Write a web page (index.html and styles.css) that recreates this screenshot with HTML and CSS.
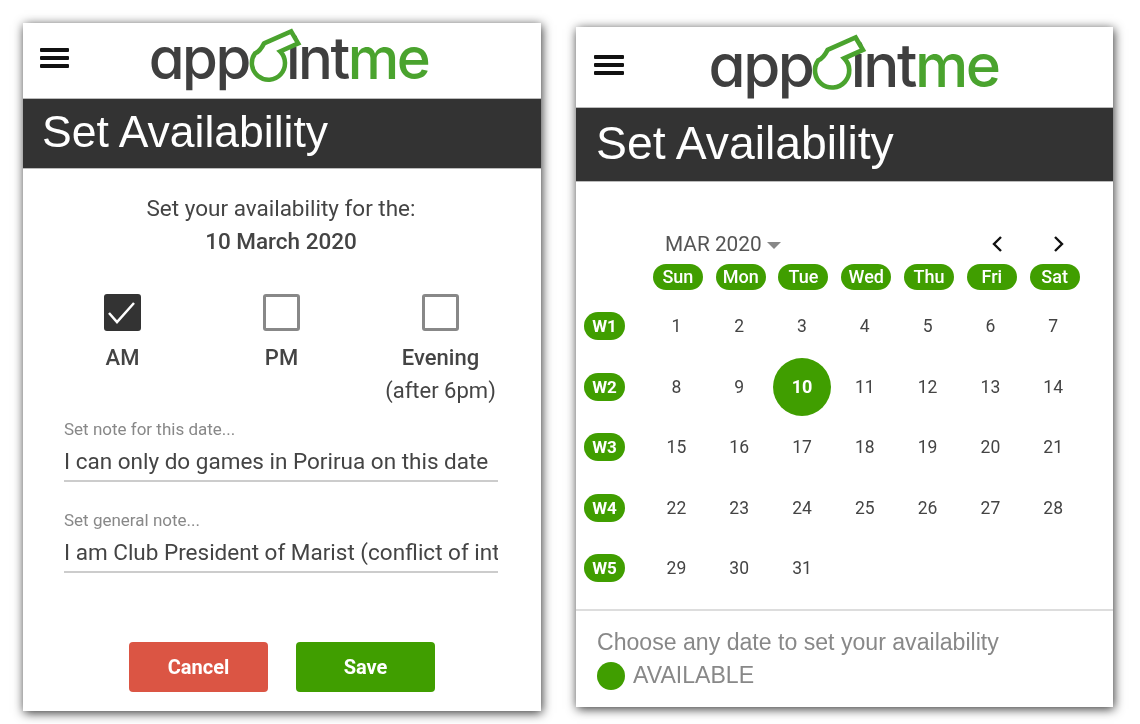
FILE: index.html
```html
<!DOCTYPE html>
<html lang="en">
<head>
    <meta charset="UTF-8">
    <meta name="viewport" content="width=device-width, initial-scale=1.0">
    <title>Set Availability</title>
    <link rel="stylesheet" href="styles.css">
</head>
<body>
    <section class="phone phone-form">
        <header class="top">
            <div class="hamburger-menu"><span></span><span></span><span></span></div>
            <div class="logo">
                <span>app</span>
                <svg class="whistle" viewBox="0 0 52 52"><path d="M15 14L42 2l7 12-18 8A16.500 16.500 0 1 1 6 24q5-2 9-10z"/></svg>
                <span>int</span><span class="logo-me">me</span>
            </div>
        </header>
        <h1 class="title">Set Availability</h1>
        <div class="form-body">
            <p class="intro">Set your availability for the:</p>
            <p class="intro-date">10 March 2020</p>
            <div class="slots">
                <div class="slot">
                    <span class="box box-on"><svg viewBox="0 0 37 37"><path d="M5 19l8 9L30 9"/></svg></span>
                    <b>AM</b>
                </div>
                <div class="slot">
                    <span class="box"></span>
                    <b>PM</b>
                </div>
                <div class="slot">
                    <span class="box"></span>
                    <b>Evening</b>
                    <small>(after 6pm)</small>
                </div>
            </div>
            <label class="field">
                <span>Set note for this date...</span>
                <input type="text" value="I can only do games in Porirua on this date">
            </label>
            <label class="field">
                <span>Set general note...</span>
                <input type="text" value="I am Club President of Marist (conflict of interest)">
            </label>
            <div class="buttons">
                <button class="btn btn-cancel">Cancel</button>
                <button class="btn btn-save">Save</button>
            </div>
        </div>
    </section>

    <section class="phone phone-cal">
        <header class="top">
            <div class="hamburger-menu"><span></span><span></span><span></span></div>
            <div class="logo">
                <span>app</span>
                <svg class="whistle" viewBox="0 0 52 52"><path d="M15 14L42 2l7 12-18 8A16.500 16.500 0 1 1 6 24q5-2 9-10z"/></svg>
                <span>int</span><span class="logo-me">me</span>
            </div>
        </header>
        <h1 class="title">Set Availability</h1>
        <div class="cal">
            <div class="cal-head">
                <span class="month">MAR 2020 <i class="caret"></i></span>
                <span class="arrows">
                    <svg viewBox="0 0 14 18"><path d="M10 2L3 9l7 7"/></svg>
                    <svg viewBox="0 0 14 18"><path d="M4 2l7 7-7 7"/></svg>
                </span>
            </div>
            <div class="cal-days">
                <span></span>
                <span class="pill">Sun</span><span class="pill">Mon</span><span class="pill">Tue</span><span class="pill">Wed</span><span class="pill">Thu</span><span class="pill">Fri</span><span class="pill">Sat</span>
            </div>
            <div class="cal-grid">
                <span class="week">W1</span>
                <span>1</span><span>2</span><span>3</span><span>4</span><span>5</span><span>6</span><span>7</span>
                <span class="week">W2</span>
                <span>8</span><span>9</span><span class="today">10</span><span>11</span><span>12</span><span>13</span><span>14</span>
                <span class="week">W3</span>
                <span>15</span><span>16</span><span>17</span><span>18</span><span>19</span><span>20</span><span>21</span>
                <span class="week">W4</span>
                <span>22</span><span>23</span><span>24</span><span>25</span><span>26</span><span>27</span><span>28</span>
                <span class="week">W5</span>
                <span>29</span><span>30</span><span>31</span>
            </div>
        </div>
        <footer class="legend">
            <p>Choose any date to set your availability</p>
            <div class="legend-row"><i class="dot"></i>AVAILABLE</div>
        </footer>
    </section>
</body>
</html>
```

FILE: styles.css
```css
body {
    margin: 0;
    padding: 23px 0 0 23px;
    box-sizing: border-box;
    height: 724px;
    display: flex;
    align-items: flex-start;
    gap: 35px;
    background: #fff;
    font-family: Roboto, Arial, sans-serif;
    color: #444;
}

p {
    margin: 0;
}

.phone {
    width: 518px;
    height: 688px;
    background: #fff;
    box-shadow: 1px 2px 10px rgba(0, 0, 0, 0.8);
    flex-shrink: 0;
    filter: blur(0.4px);
}

.phone-cal {
    width: 537px;
    height: 680px;
    margin-top: 4px;
}

/* top bar + logo */
.top {
    height: 75px;
    position: relative;
    display: flex;
    justify-content: center;
    align-items: center;
}

.phone-cal .top {
    height: 80px;
}

.hamburger-menu {
    position: absolute;
    left: 17px;
    top: 25px;
    width: 29px;
    height: 20px;
    display: flex;
    flex-direction: column;
    justify-content: space-between;
}

.phone-cal .hamburger-menu {
    left: 18px;
    top: 28px;
    width: 30px;
}

.hamburger-menu span {
    display: block;
    height: 4px;
    background: #111;
    border-radius: 1px;
}

.logo {
    display: flex;
    align-items: baseline;
    font-family: Inter, "Liberation Sans", sans-serif;
    font-feature-settings: "cv11";
    font-weight: 500;
    font-size: 58px;
    line-height: 60px;
    letter-spacing: -2.5px;
    color: #3f3f3f;
    margin-left: 13px;
    margin-top: -6px;
}

.phone-cal .logo {
    font-size: 60px;
    margin-left: 18px;
}

.logo-me {
    color: #4aa32e;
}

/* white fill hides the dot of the i behind the mouthpiece */
.whistle {
    position: relative;
    z-index: 1;
    width: 0.9em;
    height: 0.9em;
    margin-right: -0.26em;
    transform: translateY(0.04em);
    fill: #fff;
    stroke: #4aa32e;
    stroke-width: 4.5;
    overflow: visible;
}

.title {
    margin: 0;
    height: 71px;
    box-sizing: border-box;
    padding-left: 19px;
    background: #333;
    border-top: 1px solid #bbb;
    border-bottom: 1px solid #bbb;
    color: #fff;
    font-family: "Liberation Sans", Arial, sans-serif;
    font-weight: 400;
    font-size: 44.5px;
    line-height: 66px;
}

.phone-cal .title {
    height: 75px;
    padding-left: 20px;
    font-size: 46.3px;
    line-height: 70px;
}

/* left card */
.form-body {
    padding: 27px 43px 0 41px;
}

.intro,
.intro-date {
    text-align: center;
    font-size: 22.500px;
    line-height: 24px;
}

.intro-date {
    margin-top: 9px;
    font-weight: 500;
}

.slots {
    display: grid;
    grid-template-columns: repeat(3, 159px);
    margin: 41px 0 0 -21px;
    text-align: center;
}

.slot b {
    display: block;
    margin-top: 15px;
    font-size: 22px;
    font-weight: 500;
    line-height: 24px;
}

.slot small {
    display: block;
    margin-top: 9px;
    font-size: 22px;
    line-height: 24px;
}

.box {
    display: block;
    width: 37px;
    height: 37px;
    margin: 0 auto;
    box-sizing: border-box;
    border: 3px solid #888;
    border-radius: 3px;
}

.box-on {
    background: #333;
    border-color: #333;
}

.box-on svg {
    display: block;
    margin: -3px;
    width: 37px;
    height: 37px;
    fill: none;
    stroke: #fff;
    stroke-width: 2.5;
}

.field {
    display: block;
    margin-bottom: 29px;
}

.slots + .field {
    margin-top: 17px;
}

.field span {
    display: block;
    font-size: 17px;
    line-height: 18px;
    color: #888;
}

.field input {
    display: block;
    width: 100%;
    height: 44px;
    box-sizing: border-box;
    padding: 4px 0 0;
    border: 0;
    border-bottom: 2px solid #ccc;
    font-family: inherit;
    font-size: 22.5px;
    color: #444;
    outline: none;
}

.buttons {
    display: flex;
    justify-content: center;
    gap: 28px;
    margin: 69px 0 0 2px;
}

.btn {
    width: 139px;
    height: 50px;
    border: 0;
    border-radius: 4px;
    color: #fff;
    font-family: inherit;
    font-size: 20px;
    font-weight: 700;
}

.btn-cancel {
    background: #db5544;
}

.btn-save {
    background: #409e00;
}

/* calendar */
.cal {
    padding: 44px 0 0 8px;
}

.cal-head {
    display: flex;
    justify-content: space-between;
    align-items: center;
    height: 36px;
    padding: 0 48px 0 81px;
    font-size: 20.8px;
    color: #555;
}

.caret {
    display: inline-block;
    margin: 0 0 2px 0;
    border: 7px solid transparent;
    border-top-color: #888;
    border-bottom: 0;
}

.arrows {
    display: flex;
    gap: 46px;
}

.arrows svg {
    width: 14px;
    height: 18px;
    fill: none;
    stroke: #111;
    stroke-width: 2.4;
}

.cal-days,
.cal-grid {
    display: grid;
    grid-template-columns: 61.5px repeat(7, 62.8px);
    justify-items: center;
    align-items: center;
}

.cal-days {
    margin: 2px 0 6px 1px;
}

.pill {
    width: 50px;
    height: 26px;
    border-radius: 13px;
    background: #409e00;
    color: #fff;
    font-size: 18px;
    font-weight: 500;
    line-height: 25px;
    text-align: center;
}

.cal-grid {
    grid-auto-rows: 60.5px;
    grid-template-columns: 61px repeat(7, 62.8px);
    font-size: 17.5px;
}

.week {
    justify-self: start;
    width: 41px;
    height: 28px;
    border-radius: 14px;
    background: #409e00;
    color: #fff;
    font-size: 17px;
    font-weight: 700;
    line-height: 28px;
    text-align: center;
}

.today {
    width: 58px;
    height: 58px;
    border-radius: 50%;
    background: #409e00;
    color: #fff;
    font-size: 18px;
    font-weight: 700;
    line-height: 58px;
    text-align: center;
}

.legend {
    margin-top: 10px;
    padding: 18px 0 0 21px;
    border-top: 2px solid #ddd;
    font-family: "Liberation Sans", Arial, sans-serif;
    font-size: 23.1px;
    color: #888;
}

.legend-row {
    display: flex;
    align-items: center;
    gap: 8px;
    margin-top: 6px;
}

.dot {
    width: 28px;
    height: 28px;
    border-radius: 50%;
    background: #409e00;
}
```
